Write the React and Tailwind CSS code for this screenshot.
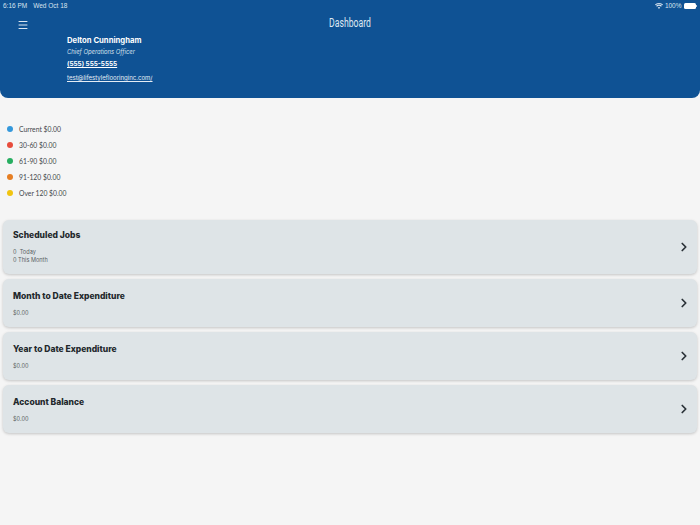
import React from 'react';
import { ChevronRight, Menu } from 'lucide-react';

const aging = [
  { label: 'Current $0.00', color: 'bg-[#3498db]' },
  { label: '30-60 $0.00', color: 'bg-[#e74c3c]' },
  { label: '61-90 $0.00', color: 'bg-[#27ae60]' },
  { label: '91-120 $0.00', color: 'bg-[#e67e22]' },
  { label: 'Over 120 $0.00', color: 'bg-[#f1c40f]' },
];

const SummaryCard = ({ title, className, textClass = '', children }) => (
  <div className={`flex items-center justify-between rounded-md bg-[#dee4e7] pl-2.5 pr-[6px] shadow-[0_1px_3px_rgba(0,0,0,0.2)] ${className}`}>
    <div className={textClass}>
      <h2 className="text-[8.5px] leading-[14px] font-extrabold text-[#22282c]">{title}</h2>
      <div className="mt-[6px] text-[5.6px] leading-[8px] text-[#5a5f63]">{children}</div>
    </div>
    <ChevronRight size={14} strokeWidth={3} className="text-[#2b3238]" />
  </div>
);

export default function App() {
  return (
    <div className="min-h-[525px] bg-[#f5f5f5] font-['Inter','Liberation_Sans',sans-serif]">
      <header className="h-[98px] rounded-b-lg bg-[#0f5294] text-white">
        <div className="flex h-[11px] items-center justify-between px-[3px] pt-[1px] font-['Liberation_Sans',sans-serif] text-[6.5px] text-[#d9e4ef]">
          <div className="flex gap-[6px]">
            <span>6:16 PM</span>
            <span>Wed Oct 18</span>
          </div>
          <div className="flex items-center gap-[2px]">
            <svg width="8" height="6" viewBox="0 0 16 12" fill="currentColor">
              <path d="M8 12 5.6 9.2a3.4 3.4 0 0 1 4.8 0ZM3.9 7.4 2.3 5.6a8.4 8.4 0 0 1 11.4 0l-1.6 1.8a6 6 0 0 0-8.2 0ZM1.3 4.5 0 3a12 12 0 0 1 16 0l-1.3 1.5a10 10 0 0 0-13.4 0Z" />
            </svg>
            <span>100%</span>
            <div className="flex items-center">
              <div className="h-[6px] w-[12px] rounded-[1.5px] bg-white" />
              <div className="ml-[0.5px] h-[2px] w-[1px] bg-[#b9cde0]" />
            </div>
          </div>
        </div>
        <div className="relative h-[24px]">
          <div className="flex h-[24px] scale-x-[0.72] items-center justify-center font-['Roboto',sans-serif] text-[12px] text-[#dfe9f3]">
            Dashboard
          </div>
          <Menu size={12} strokeWidth={2} className="absolute left-[17px] top-[8px] text-[#dbe6f0]" />
        </div>
        <div className="pl-[67px]">
          <div className="text-[7.7px] leading-[12px] font-bold">Delton Cunningham</div>
          <div className="text-[5.9px] leading-[9px] italic text-[#d5e0ec]">Chief Operations Officer</div>
          <div className="mt-[3px] text-[6.4px] leading-[11px] font-bold underline">(555) 555-5555</div>
          <div className="mt-[2px] text-[6.05px] leading-[11px] text-[#e4ecf4] underline">test@lifestyleflooringinc.com/</div>
        </div>
      </header>

      <ul className="flex flex-col gap-[10px] pl-[7px] pt-[28px] font-['Lato',sans-serif] text-[6.8px] leading-[6px] text-[#44484c]">
        {aging.map((row) => (
          <li key={row.label} className="flex items-center gap-[6px]">
            <span className={`h-[6px] w-[6px] rounded-full ${row.color}`} />
            <span>{row.label}</span>
          </li>
        ))}
      </ul>

      <div className="mt-[24px] flex flex-col gap-[5px] px-[3px]">
        <SummaryCard title="Scheduled Jobs" className="h-[54px]" textClass="pb-[2px]">
          <div>0&nbsp; Today</div>
          <div>0 This Month</div>
        </SummaryCard>
        <SummaryCard title="Month to Date Expenditure" className="h-[48px]">$0.00</SummaryCard>
        <SummaryCard title="Year to Date Expenditure" className="h-[48px]">$0.00</SummaryCard>
        <SummaryCard title="Account Balance" className="h-[48px]">$0.00</SummaryCard>
      </div>
    </div>
  );
}
